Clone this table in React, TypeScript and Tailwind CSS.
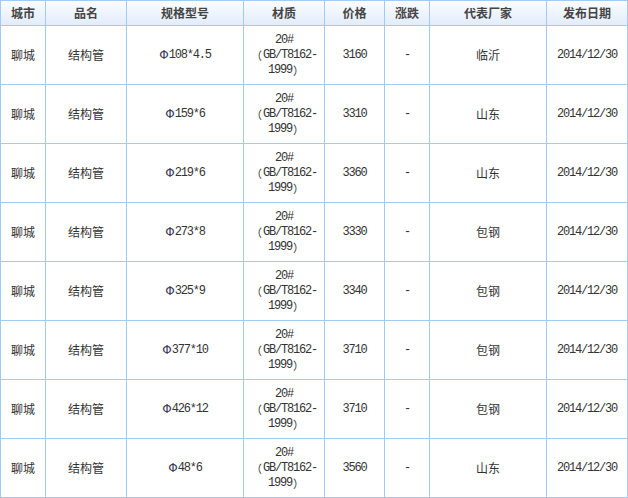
import React from "react";

const headers = ["城市", "品名", "规格型号", "材质", "价格", "涨跌", "代表厂家", "发布日期"];

const rows = [
  { spec: "108*4.5", price: "3160", maker: "临沂" },
  { spec: "159*6", price: "3310", maker: "山东" },
  { spec: "219*6", price: "3360", maker: "山东" },
  { spec: "273*8", price: "3330", maker: "包钢" },
  { spec: "325*9", price: "3340", maker: "包钢" },
  { spec: "377*10", price: "3710", maker: "包钢" },
  { spec: "426*12", price: "3710", maker: "包钢" },
  { spec: "48*6", price: "3560", maker: "山东" },
];

const cjk = "font-['Noto_Sans_CJK_SC',sans-serif]";
const mono = "font-['Liberation_Mono','Noto_Sans_CJK_SC',monospace] text-[12px] tracking-[-1.2px]";

function Cell({ children, className = "" }: { children: React.ReactNode; className?: string }) {
  return (
    <div className={`flex items-center justify-center bg-white text-center text-[#333] ${className}`}>
      {children}
    </div>
  );
}

export default function App() {
  return (
    <div className="w-[628px] h-[498px] bg-white">
      <div className="grid grid-cols-[44px_80px_116px_80px_59px_44px_116px_80px] grid-rows-[24px_repeat(8,58px)] gap-px p-px bg-[#9fcbf5]">
        {headers.map((h) => (
          <div
            key={h}
            className={`flex items-center justify-center bg-gradient-to-b from-[#fbfdff] to-[#e2ecfb] text-[12px] font-bold leading-none text-[#444] ${cjk}`}
          >
            {h}
          </div>
        ))}
        {rows.map((r) => (
          <React.Fragment key={r.spec}>
            <Cell className={`text-[12px] ${cjk}`}>聊城</Cell>
            <Cell className={`text-[12px] ${cjk}`}>结构管</Cell>
            <Cell className={mono}>
              <span className="font-['DejaVu_Sans',sans-serif] text-[12px] tracking-normal text-[#3a3a5a]">Φ</span>
              {r.spec}
            </Cell>
            <Cell className={`${mono} leading-[15px]`}>
              <div className="flex flex-col items-center">
                <span>20#</span>
                <span className="flex">
                  <span className={`${cjk} text-[11px] tracking-normal mr-[1px]`}>（</span>
                  <span>GB/T8162-</span>
                </span>
                <span className="flex pl-[4px]">
                  <span>1999</span>
                  <span className={`${cjk} text-[11px] tracking-normal ml-[1px]`}>）</span>
                </span>
              </div>
            </Cell>
            <Cell className={mono}>{r.price}</Cell>
            <Cell className={mono}>-</Cell>
            <Cell className={`text-[12px] ${cjk}`}>{r.maker}</Cell>
            <Cell className={mono}>2014/12/30</Cell>
          </React.Fragment>
        ))}
      </div>
    </div>
  );
}
